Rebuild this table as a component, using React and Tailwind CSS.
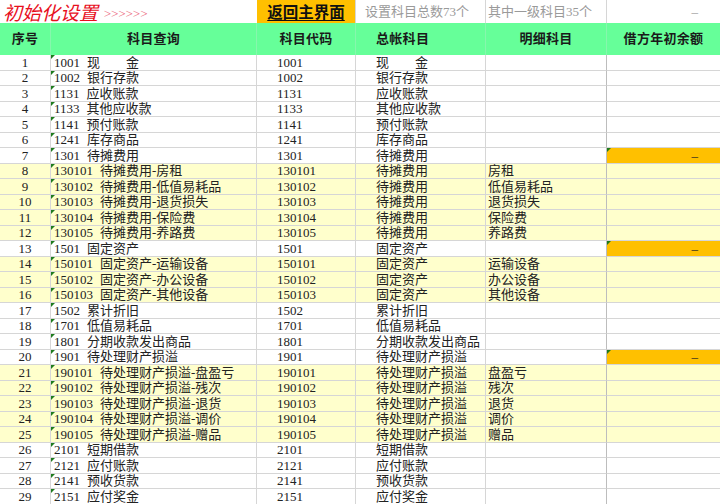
const rows = [
  ['1', '1001', '现　　金', '', 0],
  ['2', '1002', '银行存款', '', 0],
  ['3', '1131', '应收账款', '', 0],
  ['4', '1133', '其他应收款', '', 0],
  ['5', '1141', '预付账款', '', 0],
  ['6', '1241', '库存商品', '', 0],
  ['7', '1301', '待摊费用', '', 2],
  ['8', '130101', '待摊费用', '房租', 1],
  ['9', '130102', '待摊费用', '低值易耗品', 1],
  ['10', '130103', '待摊费用', '退货损失', 1],
  ['11', '130104', '待摊费用', '保险费', 1],
  ['12', '130105', '待摊费用', '养路费', 1],
  ['13', '1501', '固定资产', '', 2],
  ['14', '150101', '固定资产', '运输设备', 1],
  ['15', '150102', '固定资产', '办公设备', 1],
  ['16', '150103', '固定资产', '其他设备', 1],
  ['17', '1502', '累计折旧', '', 0],
  ['18', '1701', '低值易耗品', '', 0],
  ['19', '1801', '分期收款发出商品', '', 0],
  ['20', '1901', '待处理财产损溢', '', 2],
  ['21', '190101', '待处理财产损溢', '盘盈亏', 1],
  ['22', '190102', '待处理财产损溢', '残次', 1],
  ['23', '190103', '待处理财产损溢', '退货', 1],
  ['24', '190104', '待处理财产损溢', '调价', 1],
  ['25', '190105', '待处理财产损溢', '赠品', 1],
  ['26', '2101', '短期借款', '', 0],
  ['27', '2121', '应付账款', '', 0],
  ['28', '2141', '预收货款', '', 0],
  ['29', '2151', '应付奖金', '', 0],
]

const font = { fontFamily: '"Liberation Serif", "Noto Sans CJK SC", serif' }
const cjk = { fontFamily: '"Noto Sans CJK SC", sans-serif' }

function Tri() {
  return (
    <span className="absolute left-0 top-0 w-0 h-0 border-t-[4px] border-r-[4px] border-t-[#1e7b1e] border-r-transparent" />
  )
}

function Row({ r }) {
  const [no, code, main, sub, kind] = r
  const bg = kind === 1 ? 'bg-[#ffffcc]' : 'bg-white'
  const lastBg = kind === 2 ? 'bg-[#ffc000]' : bg
  const cell = 'h-[15.5px] border-b border-[#d6d6d6] flex items-center overflow-hidden whitespace-nowrap'
  return (
    <>
      <div className={`${cell} ${bg} border-r justify-center`}>{no}</div>
      <div className={`${cell} ${bg} border-r pl-[3px] relative`}>
        <Tri />
        <span>{code}</span>
        <span className="ml-[7px]">{sub ? `${main}-${sub}` : main}</span>
      </div>
      <div className={`${cell} ${bg} border-r pl-[20px]`}>{code}</div>
      <div className={`${cell} ${bg} border-r pl-[20px]`}>{main}</div>
      <div className={`${cell} ${bg} border-r border-r-[#bdbdbd] pl-[2px]`}>{sub}</div>
      <div className={`${cell} ${lastBg} relative justify-end pr-[22px]`}>
        {kind === 2 && <Tri />}
        {kind === 2 ? '–' : ''}
      </div>
    </>
  )
}

export default function App() {
  const head = 'h-[32px] bg-[#66ff99] flex items-center justify-center font-bold text-[13px] tracking-[0.3px] text-[#1a1a1a] border-r border-[#86f7ad]'
  return (
    <div className="w-[720px] h-[504px] overflow-hidden bg-white text-[13px] text-[#222]" style={font}>
      <div className="grid grid-cols-[51px_206px_99px_130px_121px_113px]">
        <div className="col-span-2 h-[23px] flex items-center pl-[3px] whitespace-nowrap">
          <span className="italic text-[19px] leading-[23px] pr-[3px] text-[#e8101e]" style={cjk}>初始化设置</span>
          <span className="italic text-[13px] leading-[23px] text-[#ec6a80] tracking-[-1.5px] ml-[2px] mt-[3px]">&gt;&gt;&gt;&gt;&gt;&gt;</span>
        </div>
        <div className="h-[23px] bg-[#ffc000] flex items-center justify-center border-r border-[#d6d6d6]">
          <span className="font-bold underline underline-offset-2 text-[15.5px] leading-[23px] text-[#111]" style={cjk}>返回主界面</span>
        </div>
        <div className="h-[23px] flex items-center pl-[9px] text-[#9a9a9a] border-r border-[#d6d6d6] whitespace-nowrap">设置科目总数73个</div>
        <div className="h-[23px] flex items-center pl-[2px] text-[#9a9a9a] border-r border-[#d6d6d6] whitespace-nowrap">其中一级科目35个</div>
        <div className="h-[23px] flex items-center justify-end pr-[22px] text-[#9a9a9a]">–</div>

        <div className={head}>序号</div>
        <div className={head}>科目查询</div>
        <div className={head}>科目代码</div>
        <div className={`${head} justify-start pl-[20px]`}>总帐科目</div>
        <div className={head}>明细科目</div>
        <div className={`${head} border-r-0`}>借方年初余额</div>

        {rows.map(r => <Row key={r[0]} r={r} />)}
      </div>
    </div>
  )
}
